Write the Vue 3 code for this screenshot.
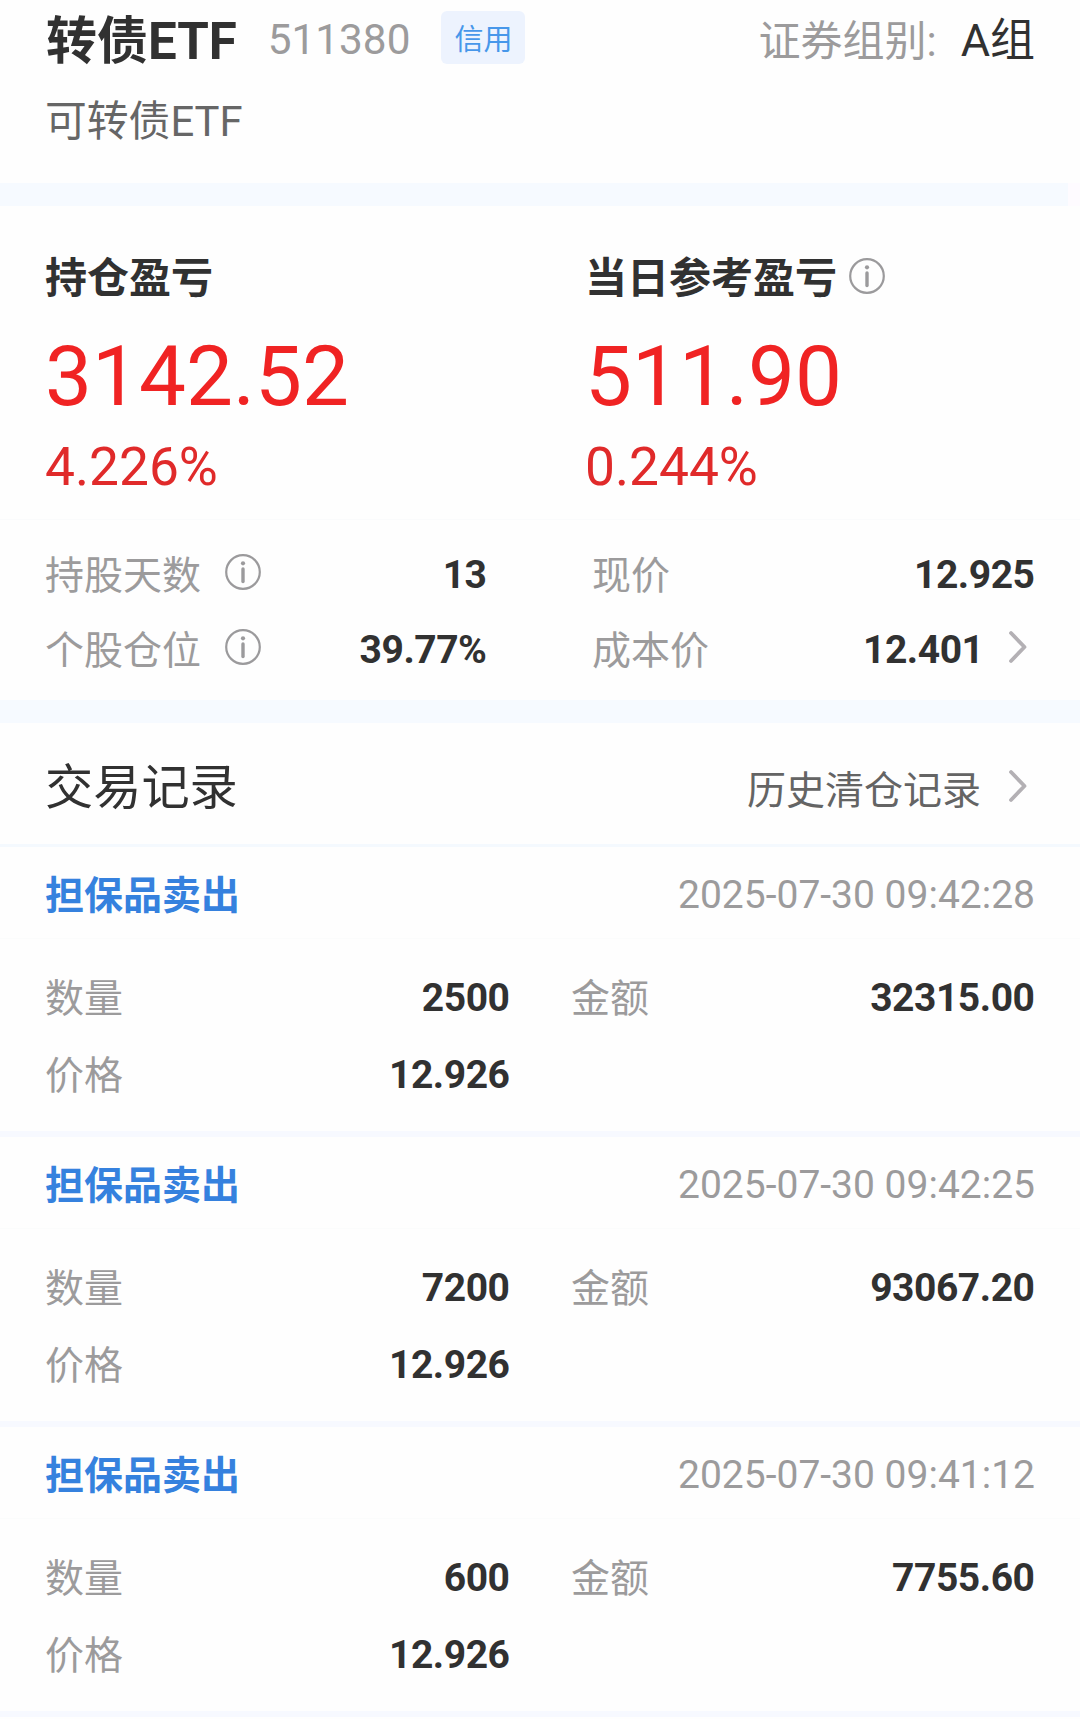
<script setup>
import { h } from 'vue'

const InfoIcon = () =>
  h('svg', { width: 36, height: 36, viewBox: '0 0 36 36', fill: 'none', style: 'display:block' }, [
    h('circle', { cx: 18, cy: 18, r: 16.8, stroke: '#9b9a9c', 'stroke-width': 2.2 }),
    h('circle', { cx: 18, cy: 9.3, r: 2.1, fill: '#9b9a9c' }),
    h('path', { d: 'M18 15v12.6', stroke: '#9b9a9c', 'stroke-width': 3.4, 'stroke-linecap': 'round' })
  ])

const ChevronIcon = () =>
  h('svg', { width: 20, height: 34, viewBox: '0 0 20 34', fill: 'none', style: 'display:block' }, [
    h('path', {
      d: 'M3 3L16.5 17L3 31',
      stroke: '#b3b0b4',
      'stroke-width': 3.8,
      'stroke-linecap': 'round',
      'stroke-linejoin': 'round'
    })
  ])

const records = [
  { type: '担保品卖出', time: '2025-07-30 09:42:28', qty: '2500', amount: '32315.00', price: '12.926' },
  { type: '担保品卖出', time: '2025-07-30 09:42:25', qty: '7200', amount: '93067.20', price: '12.926' },
  { type: '担保品卖出', time: '2025-07-30 09:41:12', qty: '600', amount: '7755.60', price: '12.926' }
]
</script>

<template>
  <main class="page">
    <header class="header">
      <div class="title-row">
        <h1 class="name">转债ETF</h1>
        <span class="code">511380</span>
        <span class="badge">信用</span>
        <span class="group-label">证券组别:</span>
        <span class="group-value">A组</span>
      </div>
      <div class="subtitle">可转债ETF</div>
    </header>

    <div class="band band-top"></div>

    <section class="summary">
      <div class="profit">
        <div class="profit-head"><span>持仓盈亏</span></div>
        <div class="profit-value">3142.52</div>
        <div class="profit-rate">4.226%</div>
      </div>
      <div class="profit">
        <div class="profit-head"><span>当日参考盈亏</span><InfoIcon class="info-head" /></div>
        <div class="profit-value">511.90</div>
        <div class="profit-rate">0.244%</div>
      </div>
    </section>

    <section class="stats">
      <div class="stats-col stats-left">
        <div class="row">
          <span class="label">持股天数</span><InfoIcon class="info-row" />
          <span class="value">13</span>
        </div>
        <div class="row">
          <span class="label">个股仓位</span><InfoIcon class="info-row" />
          <span class="value">39.77%</span>
        </div>
      </div>
      <div class="stats-col stats-right">
        <div class="row">
          <span class="label">现价</span>
          <span class="value">12.925</span>
        </div>
        <div class="row">
          <span class="label">成本价</span>
          <span class="value">12.401</span><ChevronIcon class="chevron" />
        </div>
      </div>
    </section>

    <div class="band"></div>

    <section>
      <div class="trade-head">
        <h2 class="trade-title">交易记录</h2>
        <span class="history">历史清仓记录</span><ChevronIcon class="chevron" />
      </div>
      <article v-for="r in records" :key="r.time" class="record">
        <div class="record-head">
          <span class="record-type">{{ r.type }}</span>
          <time class="record-time">{{ r.time }}</time>
        </div>
        <div class="record-body">
          <div class="record-left">
            <div class="row"><span class="label">数量</span><span class="value">{{ r.qty }}</span></div>
            <div class="row"><span class="label">价格</span><span class="value">{{ r.price }}</span></div>
          </div>
          <div class="record-right">
            <div class="row"><span class="label">金额</span><span class="value">{{ r.amount }}</span></div>
          </div>
        </div>
      </article>
    </section>
  </main>
</template>

<style>
html,
body {
  margin: 0;
  background: #fefefe;
}
</style>

<style scoped>
.page {
  width: 1080px;
  height: 1719px;
  overflow: hidden;
  background: #fefefe;
  color: #313131;
  font-family: Roboto, "Noto Sans CJK SC", sans-serif;
  font-size: 39px;
  line-height: 1;
  white-space: nowrap;
}
.header {
  height: 183px;
  padding: 0 45px 0 46px;
  box-sizing: border-box;
}
.title-row {
  display: flex;
  align-items: center;
  height: 79px;
}
.name {
  margin: 4px 0 0;
  font-size: 51px;
  font-weight: 700;
}
.code {
  margin: 2px 0 0 31px;
  font-size: 42.3px;
  color: #9c9b9c;
}
.badge {
  width: 84px;
  height: 53px;
  margin: -4px 0 0 31px;
  border-radius: 6px;
  background: #edf3fe;
  color: #4797ea;
  font-size: 29px;
  line-height: 58px;
  text-align: center;
}
.group-label {
  margin: 4px 0 0 auto;
  font-size: 42px;
  color: #9c9b9c;
}
.group-value {
  margin: 2px 0 0 24px;
  font-size: 45px;
}
.subtitle {
  height: 83px;
  margin-left: -1px;
  font-size: 41.8px;
  line-height: 86px;
  color: #666;
}
.band {
  height: 23px;
  background: #f6faff;
}
.band-top {
  width: 1068px;
  border-right: 12px solid #fefbff;
}
.summary {
  display: flex;
  height: 314px;
  padding: 41px 0 0 45px;
  box-sizing: border-box;
  border-bottom: 1px solid #fafbfc;
}
.profit {
  flex: 0 0 540px;
}
.profit-head {
  display: flex;
  align-items: center;
  height: 60px;
  font-size: 42px;
  font-weight: 700;
}
.profit-head span {
  margin-top: 4px;
}
.info-head {
  margin: -3px 0 0 12px;
}
.profit-value {
  height: 138px;
  font-size: 83.6px;
  line-height: 138px;
  color: #f02323;
}
.profit-rate {
  font-size: 53.3px;
  line-height: 44px;
  color: #e02a2a;
}
.stats {
  display: flex;
  justify-content: space-between;
  height: 180px;
  padding: 17px 45px 0;
  box-sizing: border-box;
}
.stats-left {
  width: 442px;
}
.stats-right {
  width: 443px;
}
.row {
  display: flex;
  align-items: center;
  height: 75px;
}
.label {
  margin-top: 4px;
  color: #9c9b9c;
}
.value {
  margin: 2px 0.5px 0 auto;
  font-weight: 700;
  letter-spacing: -0.45px;
}
.info-row {
  margin: -6px 0 0 24px;
}
.chevron {
  margin: -6px 7px 0 24px;
}
.trade-head {
  display: flex;
  align-items: center;
  height: 124px;
  padding: 6px 45px 0;
  box-sizing: border-box;
  border-bottom: 3px solid #f4f9fe;
}
.trade-title {
  margin: 4px 0 0;
  font-size: 48.2px;
  font-weight: 400;
}
.history {
  margin: 9px 0 0 auto;
  color: #646464;
}
.trade-head .chevron {
  margin: -1px 7px 0 27px;
}
.record {
  height: 290px;
  box-sizing: border-box;
  border-bottom: 6px solid #f7f9ff;
}
.record-head {
  display: flex;
  align-items: center;
  justify-content: space-between;
  height: 92px;
  padding: 4px 45px 0;
  box-sizing: border-box;
  border-bottom: 1px solid #fbfcfc;
}
.record-type {
  margin-top: 4px;
  font-weight: 700;
  color: #3581de;
}
.record-time {
  margin-top: 1px;
  color: #9c9b9c;
}
.record-body {
  display: flex;
  justify-content: space-between;
  padding: 20px 45px 0;
}
.record-body .row {
  height: 77px;
}
.record-body .value {
  margin-top: 1px;
}
.record-left {
  width: 465px;
}
.record-right {
  width: 464px;
}
</style>
